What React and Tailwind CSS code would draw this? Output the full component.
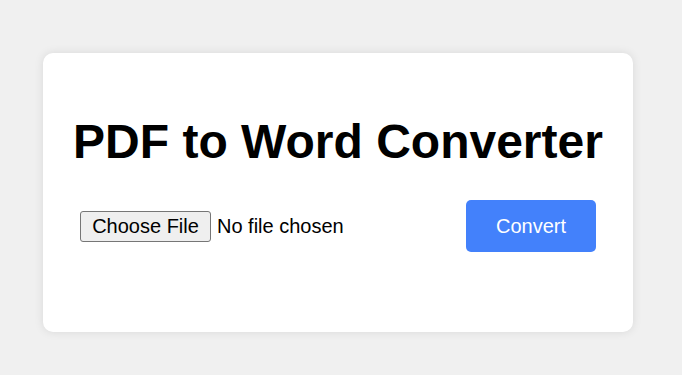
const App = () => {
  return (
    <div className="min-h-[375px] w-full bg-[#f0f0f0] pt-[53px] pl-[43px] font-['Liberation_Sans',Arial,sans-serif]">
      <div className="w-[590px] h-[279px] bg-white rounded-[10px] shadow-[0_0_10px_rgba(0,0,0,0.1)] pt-[61px] px-[37px]">
        <h1 className="-mx-[20px] text-center whitespace-nowrap text-[48px] leading-[55px] font-bold text-black">
          PDF to Word Converter
        </h1>

        <div className="mt-[31px] flex items-center justify-between">
          <label className="flex items-center text-[20px] text-black cursor-pointer">
            <span className="w-[131px] h-[31px] flex items-center justify-center bg-[#efefef] border border-[#767676] rounded-[3px] leading-none">
              Choose File
            </span>
            <span className="ml-[6px] leading-none">No file chosen</span>
          </label>

          <button className="w-[130px] h-[52px] bg-[#4381fb] text-white text-[20px] rounded-[5px]">Convert</button>
        </div>
      </div>
    </div>
  );
};

export default App;
